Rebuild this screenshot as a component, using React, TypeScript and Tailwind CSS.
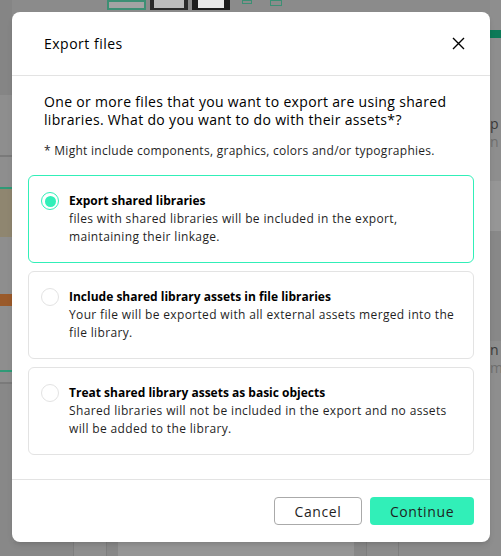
import React from "react";

const FONT = { fontFamily: '"Open Sans", "Noto Sans", sans-serif' };

interface OptionProps {
  title: string;
  lines: string[];
  selected?: boolean;
}

const ExportOption: React.FC<OptionProps> = ({ title, lines, selected = false }) => (
  <div
    className={`flex gap-2.5 rounded-md border bg-white px-3 pt-4 pb-4 ${
      selected ? "border-[#31efb8]" : "border-[#e3e3e3]"
    }`}
  >
    <div
      className={`flex h-[18px] w-[18px] shrink-0 items-center justify-center rounded-full border ${
        selected ? "border-[1.5px] border-[#31efb8]" : "border-[#e3e3e3]"
      }`}
    >
      {selected && <div className="h-[11px] w-[11px] rounded-full bg-[#31efb8]" />}
    </div>
    <div className="text-[12px] leading-[18px] text-[#1f1f1f]">
      <div className="font-bold text-black">{title}</div>
      {lines.map((l) => (
        <div key={l} className="tracking-[0.35px]">
          {l}
        </div>
      ))}
    </div>
  </div>
);

function Backdrop() {
  // the dimmed workspace behind the modal
  return (
    <div className="flex h-[556px] w-[501px] bg-[#8b8b8b]">
      <div className="flex w-[12px] flex-col">
        <div className="h-[95px] bg-[#858585]" />
        <div className="h-[60px] bg-[#8e8e8e]" />
        <div className="h-[2px] bg-[#7a7a7a]" />
        <div className="h-[30px] bg-[#8e8e8e]" />
        <div className="h-[2px] bg-[#2f9a77]" />
        <div className="h-[48px] bg-[#8f8670]" />
        <div className="h-[57px] bg-[#8e8e8e]" />
        <div className="h-[12px] bg-[#9a5a2a]" />
        <div className="h-[64px] bg-[#8e8e8e]" />
        <div className="h-[2px] bg-[#2f9a77]" />
        <div className="h-[10px] bg-[#8e8e8e]" />
        <div className="h-[2px] bg-[#7a7a7a]" />
        <div className="flex-1 bg-[#888888]" />
      </div>
      <div className="flex flex-1 flex-col">
        <div className="flex h-[12px] items-start gap-[4px] pl-[95px]">
          <div className="h-[10px] w-[39px] border-2 border-[#3d8f74] bg-[#a3a3a3]" />
          <div className="h-[10px] w-[38px] border-x-4 border-b-2 border-[#2b2b2b] bg-[#bdbdbd]" />
          <div className="h-[10px] w-[38px] border-x-[6px] border-b-2 border-[#1c1c1c] bg-[#e8e8e8]" />
          <div className="ml-[8px] h-[4px] w-[10px] border border-[#3d8f74]" />
          <div className="ml-[14px] h-[6px] w-[12px] border border-[#3d8f74]" />
        </div>
        <div className="flex-1" />
        <div className="flex h-[14px]">
          <div className="w-[61px] bg-[#888888]" />
          <div className="w-[34px] border-x border-[#7e7e7e] bg-[#8e8e8e]" />
          <div className="w-[11px] bg-[#888888]" />
          <div className="w-[236px] bg-[#969696]" />
          <div className="w-[12px] bg-[#888888]" />
          <div className="w-[33px] border-x border-[#7e7e7e] bg-[#8c8c8c]" />
          <div className="flex-1 bg-[#8c8c8c]" />
        </div>
      </div>
      <div className="flex w-[11px] flex-col bg-[#8e8e8e] text-[14px] leading-[18px] text-[#3a3a3a]" style={FONT}>
        <div className="h-[30px]" />
        <div className="h-[8px] bg-[#0d7a58]" />
        <div className="h-[77px]" />
        <div className="h-[18px]">p</div>
        <div className="h-[18px] text-[#6f6f6f]">n</div>
        <div className="h-[30px]" />
        <div className="h-[50px] bg-[#969696]" />
        <div className="h-[110px] bg-[#888888]" />
        <div className="h-[18px]">n</div>
        <div className="h-[18px] text-[#6f6f6f]">m</div>
      </div>
    </div>
  );
}

export default function App() {
  return (
    <div className="relative h-[556px] w-[501px] overflow-hidden" style={FONT}>
      <Backdrop />

      {/* Modal */}
      <div className="absolute left-[12px] top-[12px] flex h-[530px] w-[478px] flex-col rounded-lg bg-white shadow-md">
        <div className="flex h-[64px] shrink-0 items-center justify-between border-b border-[#e3e3e3] pl-8 pr-[25px]">
          <h2 className="text-[14px] tracking-[0.5px] text-black">Export files</h2>
          <svg width="13" height="13" viewBox="0 0 13 13" fill="none" stroke="#000" strokeWidth="1.4">
            <path d="M1 1L12 12M12 1L1 12" />
          </svg>
        </div>

        <div className="flex flex-1 flex-col px-4 pt-[17px]">
          <p className="px-4 text-[14px] leading-[18px] tracking-[0.33px] text-black">
            One or more files that you want to export are using shared
            <br />
            libraries. What do you want to do with their assets*?
          </p>
          <p className="mt-[13px] px-4 text-[12px] leading-[18px] tracking-[0.28px] text-[#1f1f1f]">
            * Might include components, graphics, colors and/or typographies.
          </p>

          <div className="mt-[15px] flex flex-col gap-2">
            <ExportOption
              selected
              title="Export shared libraries"
              lines={["files with shared libraries will be included in the export,", "maintaining their linkage."]}
            />
            <ExportOption
              title="Include shared library assets in file libraries"
              lines={["Your file will be exported with all external assets merged into the", "file library."]}
            />
            <ExportOption
              title="Treat shared library assets as basic objects"
              lines={["Shared libraries will not be included in the export and no assets", "will be added to the library."]}
            />
          </div>
        </div>

        <div className="flex h-[63px] shrink-0 items-center justify-end gap-2 border-t border-[#e3e3e3] pr-4">
          <button className="h-[28px] w-[88px] rounded border border-[#aaaaaa] bg-white text-[14px] tracking-[0.6px] text-[#1f1f1f]">
            Cancel
          </button>
          <button className="h-[28px] w-[104px] rounded bg-[#31efb8] text-[14px] tracking-[0.6px] text-[#1f1f1f]">
            Continue
          </button>
        </div>
      </div>
    </div>
  );
}
